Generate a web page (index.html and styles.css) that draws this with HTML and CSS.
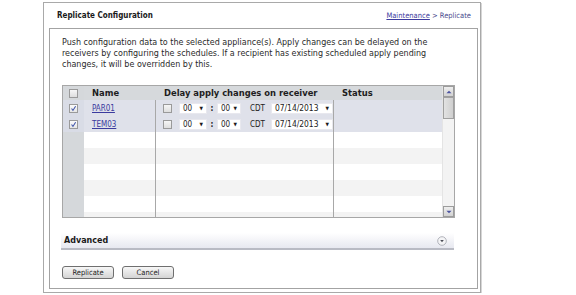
FILE: index.html
```html
<!DOCTYPE html>
<html>
<head>
    <title>Replicate Configuration</title>
    <link rel="stylesheet" href="styles.css">
</head>
<body>
<div class="frame">
    <div class="frame-head">
        <span class="frame-title">Replicate Configuration</span>
        <span class="crumbs"><a href="#">Maintenance</a> &gt; Replicate</span>
    </div>
    <div class="frame-body">
        <p class="intro">Push configuration data to the selected appliance(s). Apply changes can be delayed on the<br>receivers by configuring the schedules. If a recipient has existing scheduled apply pending<br>changes, it will be overridden by this.</p>

        <div class="grid">
            <div class="grid-main">
                <div class="row head">
                    <div class="cell cb"><span class="box"></span></div>
                    <div class="cell name">Name</div>
                    <div class="cell delay">Delay apply changes on receiver</div>
                    <div class="cell status">Status</div>
                </div>
                <div class="row sel">
                    <div class="cell cb"><span class="box checked"><svg viewBox="0 0 9 9"><path d="M2 4.5 L3.8 7 L7.2 1.5" fill="none" stroke="#3a4fa8" stroke-width="1.3"/></svg></span></div>
                    <div class="cell name"><a href="#">PAR01</a></div>
                    <div class="cell delay">
                        <span class="box"></span>
                        <span class="pick hh">00 <i>&#9660;</i></span>
                        <span class="colon">:</span>
                        <span class="pick mm">00 <i>&#9660;</i></span>
                        <span class="tz">CDT</span>
                        <span class="pick date">07/14/2013 <i>&#9660;</i></span>
                    </div>
                    <div class="cell status"></div>
                </div>
                <div class="row sel">
                    <div class="cell cb"><span class="box checked"><svg viewBox="0 0 9 9"><path d="M2 4.5 L3.8 7 L7.2 1.5" fill="none" stroke="#3a4fa8" stroke-width="1.3"/></svg></span></div>
                    <div class="cell name"><a href="#">TEM03</a></div>
                    <div class="cell delay">
                        <span class="box"></span>
                        <span class="pick hh">00 <i>&#9660;</i></span>
                        <span class="colon">:</span>
                        <span class="pick mm">00 <i>&#9660;</i></span>
                        <span class="tz">CDT</span>
                        <span class="pick date">07/14/2013 <i>&#9660;</i></span>
                    </div>
                    <div class="cell status"></div>
                </div>
                <div class="row"><div class="cell cb"></div><div class="cell name"></div><div class="cell delay"></div><div class="cell status"></div></div>
                <div class="row alt"><div class="cell cb"></div><div class="cell name"></div><div class="cell delay"></div><div class="cell status"></div></div>
                <div class="row"><div class="cell cb"></div><div class="cell name"></div><div class="cell delay"></div><div class="cell status"></div></div>
                <div class="row alt"><div class="cell cb"></div><div class="cell name"></div><div class="cell delay"></div><div class="cell status"></div></div>
                <div class="row"><div class="cell cb"></div><div class="cell name"></div><div class="cell delay"></div><div class="cell status"></div></div>
                <div class="row alt"><div class="cell cb"></div><div class="cell name"></div><div class="cell delay"></div><div class="cell status"></div></div>
            </div>
            <div class="scrollbar">
                <span class="sb-btn"><svg viewBox="0 0 7 4"><path d="M0.5 3.5 L3.5 0.5 L6.5 3.5 Z" fill="#4a52a0"/></svg></span>
                <span class="sb-thumb"></span>
                <span class="sb-track"></span>
                <span class="sb-btn"><svg viewBox="0 0 7 4"><path d="M0.5 0.5 L3.5 3.5 L6.5 0.5 Z" fill="#4a52a0"/></svg></span>
            </div>
        </div>

        <div class="advanced">
            <span class="adv-label">Advanced</span>
            <span class="adv-toggle"><svg viewBox="0 0 10 10"><circle cx="5" cy="5" r="4.3" fill="#f4f4f6" stroke="#a9abb3" stroke-width="0.9"/><path d="M3.2 4 L5 6.2 L6.8 4 Z" fill="#4b4d57"/></svg></span>
        </div>

        <div class="actions">
            <button type="button" class="btn">Replicate</button>
            <button type="button" class="btn">Cancel</button>
        </div>
    </div>
</div>
</body>
</html>
```

FILE: styles.css
```css
* {
    box-sizing: border-box;
}

body {
    margin: 0;
    background-color: #ffffff;
    font-family: "DejaVu Sans Condensed", "DejaVu Sans", sans-serif;
    font-size: 8px;
    color: #222222;
}

a {
    color: #3b3b9e;
}

.frame {
    margin: 2px 0 0 43px;
    width: 438px;
    height: 291px;
    border: 1px solid #a9a9a9;
    box-shadow: 1px 1px 0 #d6d6d6;
    display: flex;
    flex-direction: column;
}

.frame-head {
    height: 25px;
    display: flex;
    justify-content: space-between;
    align-items: center;
    padding: 0 9px 0 13px;
}

.frame-title {
    font-weight: bold;
    font-size: 8px;
    color: #1a1a1a;
}

.crumbs {
    font-size: 7.5px;
    color: #4a4a8c;
}

.crumbs a {
    color: #3b3b9e;
}

.frame-body {
    flex: 1;
    margin: 0 2px 3px 5px;
    border: 1px solid #a3a3a3;
    padding: 8px 0 0 12px;
}

.intro {
    margin: 0;
    font-family: "DejaVu Sans", sans-serif;
    font-size: 8px;
    line-height: 11px;
    color: #2a2a2a;
}

.grid {
    margin-top: 15px;
    width: 393px;
    height: 133px;
    border: 1px solid #a7a7a7;
    display: flex;
    overflow: hidden;
}

.grid-main {
    width: 380px;
    overflow: hidden;
}

.row {
    display: grid;
    grid-template-columns: 21px 72px 178px 1fr;
    height: 16px;
    background-color: #ffffff;
}

.row.alt {
    background-color: #f3f3f3;
}

.row.sel {
    background-color: #dfe1ea;
}

.row.head {
    height: 14px;
    background-color: #d6d9dc;
    font-family: "DejaVu Sans", sans-serif;
    font-size: 8.4px;
    font-weight: bold;
    color: #1e1e1e;
}

.cell {
    display: flex;
    align-items: center;
    overflow: hidden;
    white-space: nowrap;
}

.cell.cb {
    justify-content: center;
    background-color: #d5d8db;
}

.row.sel .cell.cb {
    background-color: #d9dce6;
}

.cell.name {
    padding-left: 8px;
    border-right: 1px solid #a8a8a8;
}

.row.head .cell.name {
    border-right: none;
}

.cell.delay {
    padding-left: 7px;
    border-right: 1px solid #a8a8a8;
}

.row.head .cell.delay {
    padding-left: 8px;
    border-right: none;
}

.cell.status {
    padding-left: 8px;
}

.box {
    display: inline-block;
    width: 9px;
    height: 9px;
    border: 1px solid #9a9a9a;
    background: linear-gradient(#f6f6f6, #dedede);
    flex-shrink: 0;
}

.box svg {
    display: block;
    width: 7px;
    height: 7px;
}

.box.checked {
    background: linear-gradient(#fbfbfb, #e6e6e6);
}

.pick {
    display: inline-flex;
    align-items: center;
    justify-content: space-between;
    height: 11px;
    padding: 0 3px;
    background-color: #ffffff;
    border: 1px solid #e8e8ee;
    color: #222222;
}

.pick i {
    font-style: normal;
    font-size: 5px;
    color: #1a1a1a;
}

.pick.hh {
    margin-left: 7px;
    width: 28px;
}

.colon {
    width: 10px;
    text-align: center;
    font-weight: bold;
}

.pick.mm {
    width: 24px;
}

.tz {
    margin-left: 9px;
    width: 21px;
}

.pick.date {
    width: 62px;
    font-size: 8.4px;
}

.scrollbar {
    width: 12px;
    display: flex;
    flex-direction: column;
    background-color: #f3f3f3;
    border-left: 1px solid #e4e4e4;
}

.sb-btn {
    height: 11px;
    display: flex;
    align-items: center;
    justify-content: center;
    background: linear-gradient(#eeeeee, #d2d2d2);
    border: 1px solid #9c9c9c;
}

.sb-btn svg {
    width: 6px;
    height: 4px;
}

.sb-thumb {
    height: 22px;
    background: linear-gradient(to right, #e2e2e2, #cfcfcf);
    border: 1px solid #a0a0a0;
}

.sb-track {
    flex: 1;
}

.advanced {
    margin-top: 15px;
    width: 393px;
    height: 17px;
    display: flex;
    justify-content: space-between;
    align-items: center;
    padding: 0 7px 0 3px;
    margin-left: -1px;
    background: linear-gradient(#ffffff, #e7e8f0);
    border-bottom: 2px solid #b9bbc4;
    font-family: "DejaVu Sans", sans-serif;
    font-weight: bold;
    color: #1a1a1a;
}

.adv-toggle svg {
    display: block;
    width: 10px;
    height: 10px;
}

.actions {
    margin-top: 16px;
    display: flex;
    gap: 8px;
}

.btn {
    width: 52px;
    height: 13px;
    padding: 0;
    font-family: "DejaVu Sans Condensed", "DejaVu Sans", sans-serif;
    font-size: 7.5px;
    color: #222222;
    border: 1px solid #6f6f6f;
    border-radius: 3px;
    background: linear-gradient(#f7f7f7, #d4d4d4);
}
```
